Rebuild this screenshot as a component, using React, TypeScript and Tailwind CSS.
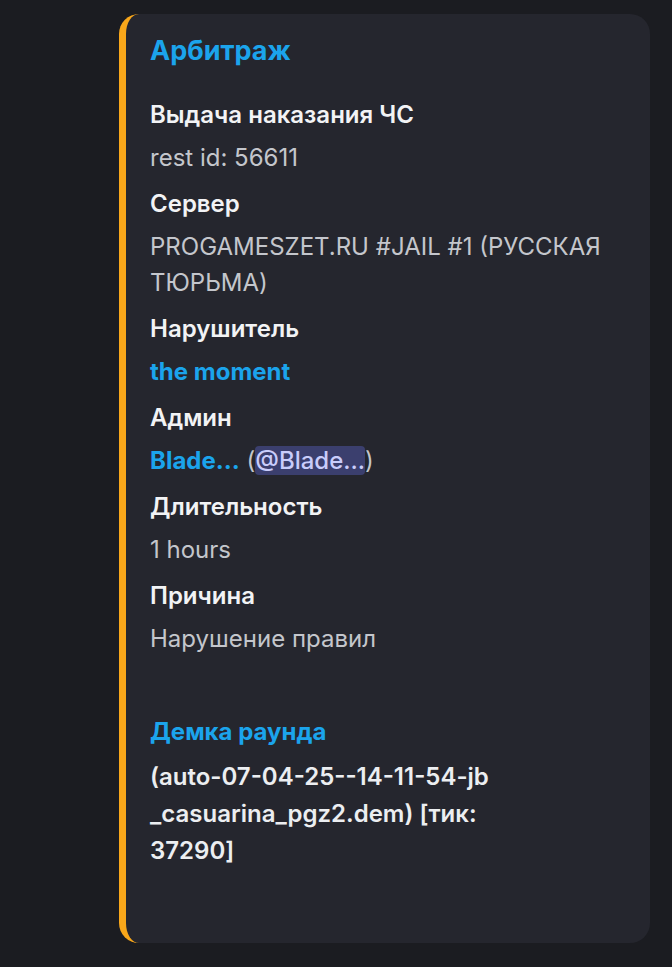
const fields = [
  { name: "Выдача наказания ЧС", value: <span className="text-[#c4c6cc]">rest id: 56611</span> },
  { name: "Сервер", value: <span className="text-[#c4c6cc]">PROGAMESZET.RU #JAIL #1 (РУССКАЯ ТЮРЬМА)</span> },
  { name: "Нарушитель", value: <span className="font-bold text-[#1ba4ec]">the moment</span> },
  {
    name: "Админ",
    value: (
      <span className="text-[#c4c6cc]">
        <span className="font-bold text-[#1ba4ec]">Blade...</span> (
        <span className="rounded-[4px] bg-[#3b3f6e] font-medium text-[#c9cdfb]">@Blade...</span>)
      </span>
    ),
  },
  { name: "Длительность", value: <span className="text-[#c4c6cc]">1 hours</span> },
  { name: "Причина", value: <span className="text-[#c4c6cc]">Нарушение правил</span> },
];

export default function App() {
  return (
    <div className="min-h-screen bg-[#1b1c21] pl-[119px] pt-[14px] font-['Inter',sans-serif]">
      <div className="w-[531px] rounded-[20px] border-l-[7px] border-[#f9a71a] bg-[#25262e] pb-[74px] pl-[24px] pr-[22px] pt-[19px]">
        <div className="text-[27px] font-bold leading-[36px] text-[#1ba4ec]">Арбитраж</div>

        <div className="mt-[28px] flex flex-col gap-[10px]">
          {fields.map((f) => (
            <div key={f.name}>
              <div className="text-[24px] font-semibold leading-[36px] text-[#f2f3f5]">{f.name}</div>
              <div className="mt-[7px] text-[24px] leading-[36px]">{f.value}</div>
            </div>
          ))}
        </div>

        <div className="mt-[57px]">
          <div className="text-[24px] font-bold leading-[36px] text-[#1ba4ec]">Демка раунда</div>
          <div className="mt-[8px] text-[24px] font-semibold leading-[37px] text-[#eceef1]">
            (auto-07-04-25--14-11-54-jb
            <br />
            _casuarina_pgz2.dem) [тик:
            <br />
            37290]
          </div>
        </div>
      </div>
    </div>
  );
}
